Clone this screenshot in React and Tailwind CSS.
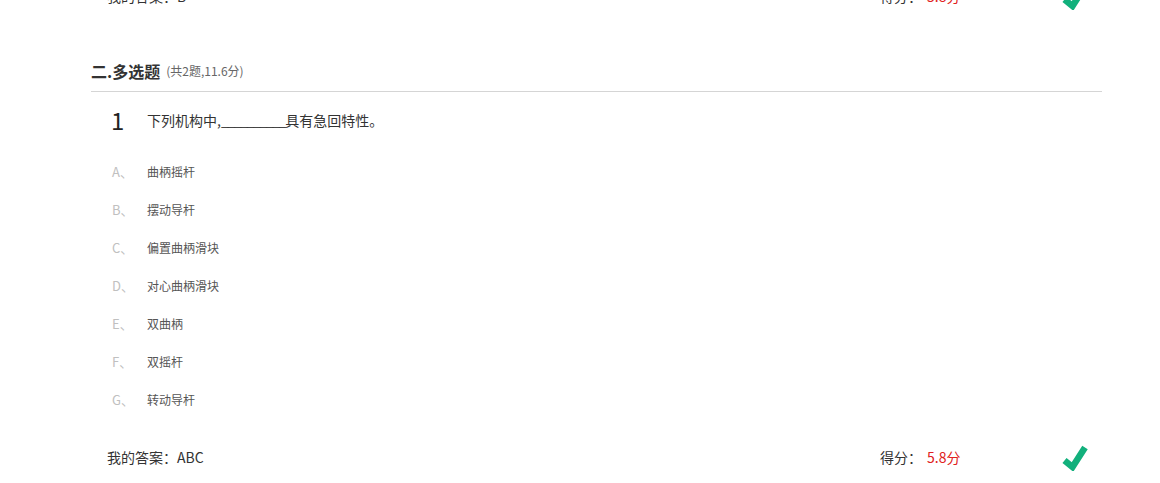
import React from "react";

const options = [
	{ key: "A", text: "曲柄摇杆" },
	{ key: "B", text: "摆动导杆" },
	{ key: "C", text: "偏置曲柄滑块" },
	{ key: "D", text: "对心曲柄滑块" },
	{ key: "E", text: "双曲柄" },
	{ key: "F", text: "双摇杆" },
	{ key: "G", text: "转动导杆" },
];

function Check() {
	return (
		<svg width="27" height="27" viewBox="0 0 27 27" className="block">
			<polyline
				points="3.5,16.5 11.5,23 24,3.5"
				fill="none"
				stroke="#12b07c"
				strokeWidth="6.5"
				strokeLinejoin="miter"
			/>
		</svg>
	);
}

function AnswerRow({ answer, score }) {
	return (
		<div className="flex items-center h-10">
			<div className="w-[789px] pl-[16px] text-[14px] text-[#333]">
				我的答案：{answer}
			</div>
			<div className="text-[14px] text-[#333]">得分：</div>
			<div className="ml-[5px] text-[14px] text-[#e02020]">{score}</div>
			<div className="ml-auto mr-[14px]">
				<Check />
			</div>
		</div>
	);
}

function App() {
	return (
		<div
			className="w-full h-[483px] overflow-hidden bg-white"
			style={{ fontFamily: '"Noto Sans CJK SC", "Microsoft YaHei", sans-serif' }}
		>
			<div className="ml-[91px] w-[1011px]">
				<div className="-mt-6">
					<AnswerRow answer="B" score="5.8分" />
				</div>

				<div className="mt-[40px] h-[36px] pb-[5px] border-b border-[#d5d5d5] flex items-center box-border">
					<span className="text-[16px] font-bold text-[#333]">二.多选题</span>
					<span className="ml-[6px] text-[12px] text-[#666]">(共2题,11.6分)</span>
				</div>

				<div className="mt-[11px] h-[34px] flex items-center pl-[20px]">
					<div className="w-[36px] text-[24px] leading-none text-[#222]">1</div>
					<div className="text-[14px] text-[#333]">
						下列机构中,<span className="tracking-[-1.4px]">__________</span>具有急回特性。
					</div>
				</div>

				<div className="mt-[16px]">
					{options.map((o) => (
						<div key={o.key} className="h-[38px] flex items-center pl-[21px]">
							<div className="w-[35px] text-[13px] text-[#c0c0c0]">{o.key}、</div>
							<div className="text-[12px] text-[#555]">{o.text}</div>
						</div>
					))}
				</div>

				<div className="mt-[18px]">
					<AnswerRow answer="ABC" score="5.8分" />
				</div>
			</div>
		</div>
	);
}

export default App;
